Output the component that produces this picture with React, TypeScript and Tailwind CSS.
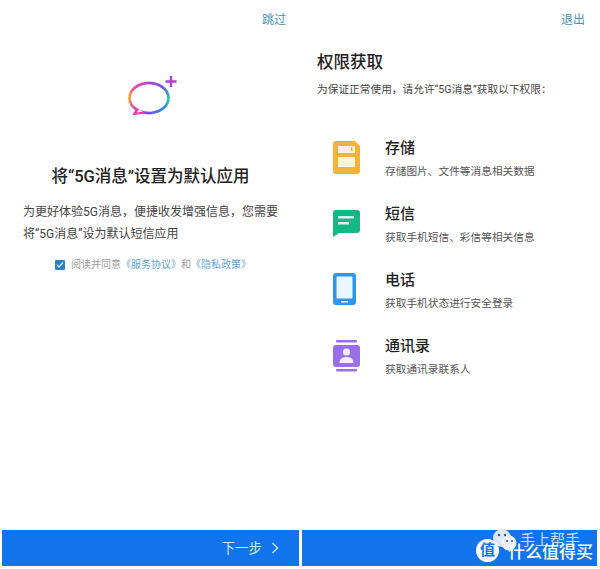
const cjk = "font-['Roboto','Noto_Sans_CJK_SC',sans-serif]";

const permissions = [
  { title: '存储', desc: '存储图片、文件等消息相关数据', icon: <StorageIcon /> },
  { title: '短信', desc: '获取手机短信、彩信等相关信息', icon: <SmsIcon /> },
  { title: '电话', desc: '获取手机状态进行安全登录', icon: <PhoneIcon /> },
  { title: '通讯录', desc: '获取通讯录联系人', icon: <ContactsIcon /> },
];

// colour stops round the bubble, clockwise from the left edge
const ringStops = [
  [245, 166, 35],
  [236, 60, 170],
  [176, 60, 220],
  [90, 90, 235],
  [30, 200, 160],
  [35, 130, 240],
  [120, 70, 235],
  [236, 60, 170],
  [245, 166, 35],
];

const ringSegments = Array.from({ length: 64 }, (_, i) => {
  const angle = (a: number) => Math.PI + (a / 64) * Math.PI * 2;
  const t = (i / 64) * (ringStops.length - 1);
  const k = Math.floor(t);
  const f = t - k;
  const c = ringStops[k].map((v, n) => Math.round(v + (ringStops[k + 1][n] - v) * f));
  return {
    x1: 21 + 19.5 * Math.cos(angle(i)),
    y1: 22 + 15 * Math.sin(angle(i)),
    x2: 21 + 19.5 * Math.cos(angle(i + 1.2)),
    y2: 22 + 15 * Math.sin(angle(i + 1.2)),
    color: `rgb(${c.join(',')})`,
  };
});

function StorageIcon() {
  return (
    <svg width="27" height="33" viewBox="0 0 27 33">
      <path d="M3 0h19l5 5v25a3 3 0 0 1-3 3H3a3 3 0 0 1-3-3V3a3 3 0 0 1 3-3z" fill="#f9b233" />
      <rect x="5" y="5" width="17" height="7" fill="#fdf3df" />
      <rect x="18" y="6" width="1.5" height="4" fill="#f9b233" />
      <rect x="5" y="16" width="17" height="10" fill="#fdf3df" />
    </svg>
  );
}

function SmsIcon() {
  return (
    <svg width="27" height="27" viewBox="0 0 27 27">
      <path d="M3 0h21a3 3 0 0 1 3 3v17a3 3 0 0 1-3 3H6l-6 4V3a3 3 0 0 1 3-3z" fill="#13b884" />
      <rect x="5" y="6" width="16" height="2.5" fill="#d8f5ea" />
      <rect x="5" y="12" width="11" height="2.5" fill="#d8f5ea" />
    </svg>
  );
}

function PhoneIcon() {
  return (
    <svg width="24" height="33" viewBox="0 0 24 33">
      <rect width="23" height="32" rx="3" fill="#2f96ee" />
      <rect x="3.500" y="3.500" width="16" height="22" rx="1" fill="#ecf6fe" />
      <rect x="8" y="28" width="7" height="1.600" fill="#ecf6fe" />
    </svg>
  );
}

function ContactsIcon() {
  return (
    <svg width="27" height="32" viewBox="0 0 27 32">
      <rect x="3" y="0" width="21" height="2.500" rx="1" fill="#9a6ee8" />
      <rect x="3" y="29" width="21" height="2.500" rx="1" fill="#9a6ee8" />
      <rect x="0" y="5" width="27" height="22" rx="3" fill="#9a6ee8" />
      <circle cx="13.500" cy="12" r="3.600" fill="#f3edfd" />
      <path d="M6.500 23c0-4 3-6 7-6s7 2 7 6z" fill="#f3edfd" />
    </svg>
  );
}

function ChatLogo() {
  return (
    <svg width="50" height="40" viewBox="0 0 50 40">
      {ringSegments.map((s, i) => (
        <line key={i} x1={s.x1} y1={s.y1} x2={s.x2} y2={s.y2} stroke={s.color} strokeWidth="2.6" />
      ))}
      <path d="M16 36.500 L6 38 L10 33" fill="#fff" stroke="#ec3caa" strokeWidth="2.200" strokeLinejoin="round" />
      <path d="M43 0v11M37.500 5.500h11" stroke="#b53fd6" strokeWidth="2.400" fill="none" />
    </svg>
  );
}

function Watermark() {
  return (
    <>
      <span className="absolute top-[4px] left-[218px] text-[15px] leading-[12px] text-white/75">手上帮手</span>
      <svg className="absolute top-[-3px] left-[184px]" width="36" height="26" viewBox="0 0 36 26">
        <circle cx="16" cy="11" r="9" fill="#dfe7f2" />
        <circle cx="23" cy="16" r="7.500" fill="#eef2f8" />
        <circle cx="13" cy="8" r="1.200" fill="#1b5fb5" />
        <circle cx="19" cy="8" r="1.200" fill="#1b5fb5" />
        <circle cx="21" cy="14" r="1" fill="#1b5fb5" />
        <circle cx="26" cy="14" r="1" fill="#1b5fb5" />
      </svg>
      <span className="absolute top-[9px] left-[174px] flex h-[23px] w-[23px] items-center justify-center rounded-full bg-white text-[15px] leading-none font-bold text-[#1274ec]">
        值
      </span>
      <span className="absolute top-[16px] left-[206px] text-[17px] leading-[12px] font-medium whitespace-nowrap text-white">
        什么值得买
      </span>
    </>
  );
}

export default function App() {
  return (
    <div className={`flex h-[569px] w-[600px] gap-[3px] overflow-hidden bg-white px-[2px] ${cjk}`}>
      {/* left page: set as default app */}
      <div className="flex w-[297px] flex-col">
        <div className="flex justify-end pr-[13px] pt-[12px] text-[12px] leading-[17px] text-[#4a93b8]">跳过</div>
        <div className="flex justify-center pt-[47px] pl-[5px]">
          <ChatLogo />
        </div>
        <h1 className="mt-[49px] text-center text-[16.500px] leading-[24px] font-medium text-[#222]">
          将“5G消息”设置为默认应用
        </h1>
        <p className="mt-[12px] pl-[21px] text-[12px] leading-[22px] text-[#444]">
          为更好体验5G消息，便捷收发增强信息，您需要
          <br />
          将“5G消息”设为默认短信应用
        </p>
        <div className="mt-[13px] flex items-center pl-[53px] text-[10px] leading-[14px]">
          <span className="mr-[6px] flex h-[10px] w-[10px] items-center justify-center rounded-[1px] bg-[#2a7fd0]">
            <svg width="8" height="8" viewBox="0 0 8 8">
              <path d="M1 4l2 2 4-4.500" stroke="#fff" strokeWidth="1.200" fill="none" />
            </svg>
          </span>
          <span className="text-[#9a9a9a]">阅读并同意</span>
          <span className="text-[#5fa5d4]">《服务协议》</span>
          <span className="text-[#9a9a9a]">和</span>
          <span className="text-[#5fa5d4]">《隐私政策》</span>
        </div>
        <div className="mt-auto mb-[3px] flex h-[36px] items-center justify-end bg-[#1274ec] pr-[20px] text-[13.500px] text-[#cfe8f8]">
          <span>下一步</span>
          <svg className="ml-[9px]" width="8" height="12" viewBox="0 0 8 12">
            <path d="M1.500 1l5 5-5 5" stroke="#cfe8f8" strokeWidth="1.300" fill="none" />
          </svg>
        </div>
      </div>

      {/* right page: permissions */}
      <div className="flex w-[295px] flex-col">
        <div className="flex justify-end pr-[12px] pt-[12px] text-[12px] leading-[17px] text-[#4a93b8]">退出</div>
        <h2 className="mt-[23px] pl-[15px] text-[16.500px] leading-[22px] font-medium text-[#222]">权限获取</h2>
        <p className="mt-[8px] pl-[15px] text-[10.700px] leading-[16px] text-[#444]">
          为保证正常使用，请允许“5G消息”获取以下权限：
        </p>
        <div className="mt-[36px] flex flex-col gap-[19px] pl-[31px]">
          {permissions.map((p) => (
            <div key={p.title} className="flex h-[47px] items-center">
              <div className="flex w-[52px] shrink-0 justify-start">{p.icon}</div>
              <div>
                <div className="text-[15px] leading-[22px] font-medium text-[#222]">{p.title}</div>
                <div className="mt-[5px] text-[10.700px] leading-[15px] text-[#555]">{p.desc}</div>
              </div>
            </div>
          ))}
        </div>
        <div className="relative mt-auto mb-[3px] h-[36px] bg-[#1274ec]">
          <Watermark />
        </div>
      </div>
    </div>
  );
}
